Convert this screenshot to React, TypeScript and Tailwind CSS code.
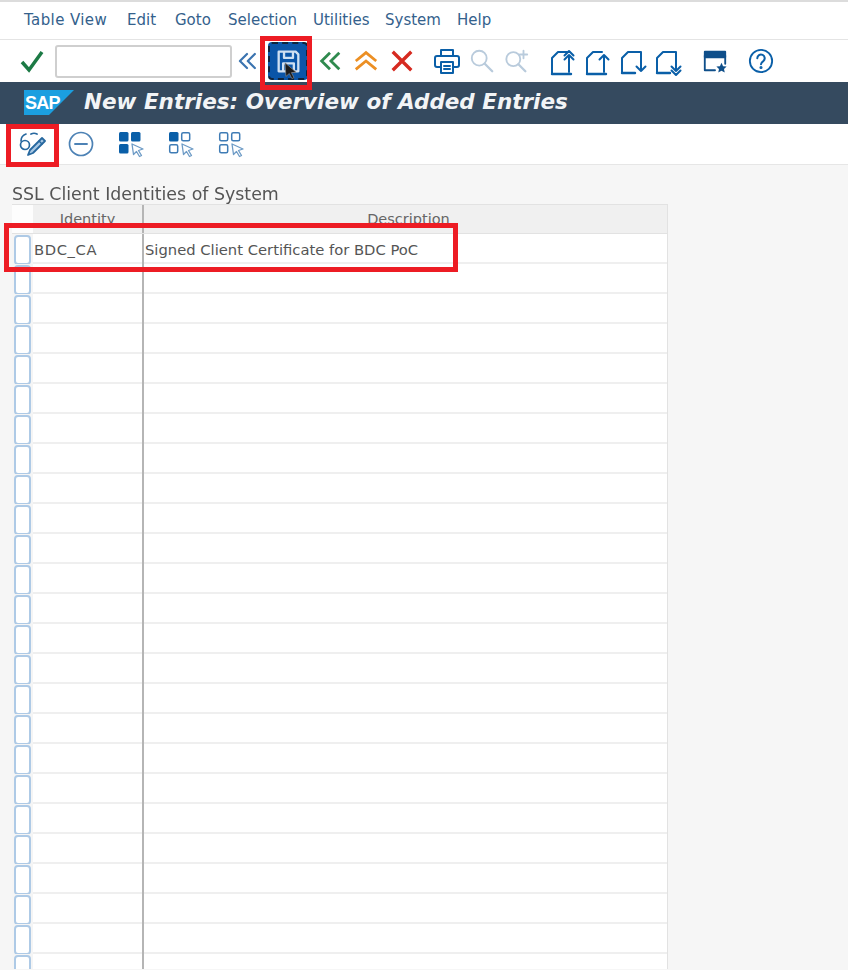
import React from 'react';

const menus = ['Table View', 'Edit', 'Goto', 'Selection', 'Utilities', 'System', 'Help'];

function Icon({ className, size = 28, children }: { className?: string; size?: number; children: React.ReactNode }) {
  return (
    <svg
      viewBox="0 0 28 28"
      width={size}
      height={size}
      fill="none"
      stroke="currentColor"
      strokeWidth={2}
      strokeLinecap="round"
      strokeLinejoin="round"
      className={`shrink-0 ${className ?? ''}`}
    >
      {children}
    </svg>
  );
}

// page with a folded corner, the arrow goes up or down at the right
function PageIcon({ arrow, double, className }: { arrow: 'up' | 'down'; double?: boolean; className?: string }) {
  return (
    <Icon className={`mt-[3px] text-[#0a5fa8] ${className ?? ''}`}>
      {arrow === 'up' ? (
        <>
          <path d="M2 25V9l6-6h9" />
          <path d="M2 25h19" strokeWidth={2.400} />
          <path d="M19 23V6M14.500 10.500 19 6l4.500 4.500" />
          {double && <path d="M14.500 6.500 19 2l4.500 4.500" />}
        </>
      ) : (
        <>
          <path d="M2 24V9l6-6h13v5" />
          <path d="M2 24h13" strokeWidth={2.400} />
          <path d="M21 8v14M16.500 17.500 21 22l4.500-4.500" />
          {double && <path d="M16.500 21.500 21 26l4.500-4.500" />}
        </>
      )}
    </Icon>
  );
}

function GridIcon({ filled, className }: { filled: number[]; className?: string }) {
  const cells = [
    [1, 2],
    [13, 2],
    [1, 14],
  ];
  return (
    <Icon className={`text-[#0a5fa8] ${className ?? ''}`}>
      {cells.map(([x, y], i) =>
        filled.includes(i) ? (
          <rect key={i} x={x} y={y} width={9.500} height={9.500} rx={1.500} fill="currentColor" stroke="none" />
        ) : (
          <rect key={i} x={x + 0.7} y={y + 0.7} width={8} height={8} rx={1.500} strokeWidth={1.500} className="text-[#3f7cb5]" />
        )
      )}
      <path d="M14 14l11 5-4.500 1.500 3 5-2 1-3-5-3 3z" strokeWidth={1.300} fill="#fff" className="text-[#6d9bc6]" />
    </Icon>
  );
}

function MainToolbar() {
  return (
    <div className="flex h-[42px] items-center bg-white">
      <Icon className="ml-[18px] text-[#1c7a45]">
        <path d="M4 15l7 8L24 5" strokeWidth={3.500} strokeLinecap="butt" strokeLinejoin="miter" />
      </Icon>
      <div className="ml-[9px] h-[33px] w-[177px] rounded-[3px] border-2 border-[#cfcfcf] bg-white" />
      <Icon size={22} className="ml-[4px] text-[#3b74b0]">
        <path d="M14 5 5 14l9 9M24 5l-9 9 9 9" strokeWidth={2.800} />
      </Icon>
      <div className="relative ml-[10px] flex h-[38px] w-[40px] shrink-0 items-center justify-center rounded-[4px] border-2 border-dashed border-[#10233a] bg-[#0a55a8]">
        <svg viewBox="0 0 28 28" width={25} height={25} fill="none" stroke="#cfe0f2" strokeWidth={2.600} strokeLinejoin="round">
          <path d="M3 3h19l3 3v19H3z" />
          <path d="M9 3v7h10V3M8 25V16h12v9" />
        </svg>
        <svg viewBox="0 0 16 20" width={14} height={17} className="absolute top-[18px] left-[14px]">
          <path d="M1 1l13 11-5.500 .5 3 6-2.500 1-3-6-4 3.500z" fill="#1a1a1a" stroke="#8a8a8a" strokeWidth={0.800} />
        </svg>
      </div>
      <Icon size={26} className="ml-[9px] text-[#2f8a4e]">
        <path d="M14 5 5 14l9 9M24 5l-9 9 9 9" strokeWidth={3} strokeLinecap="butt" strokeLinejoin="miter" />
      </Icon>
      <Icon size={26} className="ml-[10px] text-[#ec8f23]">
        <path d="M3 14l11-9 11 9M3 23l11-9 11 9" strokeWidth={3} strokeLinecap="butt" strokeLinejoin="miter" />
      </Icon>
      <Icon size={26} className="ml-[10px] text-[#d62a20]">
        <path d="M4 4l20 20M24 4 4 24" strokeWidth={3.600} strokeLinecap="butt" />
      </Icon>
      <Icon className="ml-[18px] text-[#0a5fa8]">
        <path d="M8 9V3h12v6" />
        <path d="M8 20H4a2 2 0 0 1-2-2v-7a2 2 0 0 1 2-2h20a2 2 0 0 1 2 2v7a2 2 0 0 1-2 2h-4" />
        <path d="M8 15h12v11H8zM11 19h6M11 22h6" />
      </Icon>
      <Icon size={26} className="ml-[8px] text-[#b9cbdc]">
        <circle cx="11" cy="11" r="8" />
        <path d="M17 17l8 8" strokeWidth={2.500} />
      </Icon>
      <Icon size={26} className="ml-[9px] text-[#b9cbdc]">
        <circle cx="10" cy="12" r="7.500" />
        <path d="M15.500 17.500 23 25" strokeWidth={2.500} />
        <path d="M21 3v8M17 7h8" />
      </Icon>
      <PageIcon arrow="up" double className="ml-[20px]" />
      <PageIcon arrow="up" className="ml-[7px]" />
      <PageIcon arrow="down" className="ml-[7px]" />
      <PageIcon arrow="down" double className="ml-[7px]" />
      <Icon size={26} className="ml-[19px] text-[#0f4f8a]">
        <path d="M3 4h22v6H3z" fill="currentColor" />
        <path d="M3 8v16h11M25 8v9" />
        <path d="M21 16l1.700 3.600 3.800.4-2.800 2.600.8 3.800-3.500-2-3.500 2 .8-3.800-2.800-2.600 3.800-.4z" fill="currentColor" stroke="none" />
      </Icon>
      <Icon size={26} className="ml-[20px] text-[#0a5fa8]">
        <circle cx="14" cy="14" r="12" />
        <path d="M10 11a4 4 0 1 1 6.500 3.100c-1.500 1.100-2.500 1.900-2.500 3.400" strokeWidth={2.200} />
        <circle cx="14" cy="21" r="0.700" fill="currentColor" />
      </Icon>
    </div>
  );
}

function AppToolbar() {
  return (
    <div className="flex h-[41px] items-center border-b border-[#e6e6e6] bg-white">
      <Icon className="ml-[18px] text-[#27689f]">
        <circle cx="7" cy="15" r="4.500" strokeWidth={1.700} />
        <path d="M3 11c0-4 2-6 5-7M13 4c2-1 4-1 6 0" strokeWidth={1.700} />
        <path d="M24 8l3 3-12 12-5 2 2-5z" strokeWidth={1.800} fill="#a9c8e4" />
        <path d="M21 11l3 3" strokeWidth={1.400} />
      </Icon>
      <Icon className="ml-[21px] text-[#4d82b5]">
        <circle cx="14" cy="14" r="11.500" strokeWidth={1.700} />
        <path d="M8 14h12" strokeWidth={1.900} />
      </Icon>
      <GridIcon filled={[0, 1, 2]} className="ml-[23px]" />
      <GridIcon filled={[0]} className="ml-[22px]" />
      <GridIcon filled={[]} className="ml-[22px]" />
    </div>
  );
}

function Row({ identity, description }: { identity?: string; description?: string }) {
  return (
    <div className="relative flex h-[30px] shrink-0">
      <div className="relative w-[21px] shrink-0 bg-[#f5f5f5]">
        <div className="absolute top-[1px] left-[2px] h-[30px] w-[17px] rounded-[4px] border-2 border-[#aecae6] bg-white" />
      </div>
      <div className="w-[109px] shrink-0 border-b-2 border-[#efefef] bg-white pt-[3px] pl-px text-[14.750px] leading-[26px] tracking-[0.600px] text-[#555]">{identity}</div>
      <div className="w-[2px] shrink-0 bg-[#b5b5b5]" />
      <div className="flex-1 border-b-2 border-[#efefef] bg-white pt-[3px] pl-px text-[14.750px] leading-[26px] text-[#555]">{description}</div>
    </div>
  );
}

export default function App() {
  const emptyRows = Array.from({ length: 24 });

  return (
    <div className="relative h-[970px] w-[848px] overflow-hidden bg-[#f6f6f6] font-['DejaVu_Sans',sans-serif]">
      <div className="blur-[0.4px]">
        <div className="h-[2px] bg-[#dcdcdc]" />
        <div className="grid h-[38px] grid-cols-[103px_48px_53px_85px_72px_72px_auto] items-center border-b border-[#e4e4e4] bg-white pl-[24px] text-[15px] text-[#34618c]">
          {menus.map((m) => (
            <span key={m} className="whitespace-nowrap first:tracking-[0.400px]">
              {m}
            </span>
          ))}
        </div>
        <MainToolbar />
        <div className="flex h-[42px] items-center bg-[#354a5f] pb-[1px] pl-[24px]">
          <svg viewBox="0 0 50 25" width={50} height={25} className="shrink-0">
            <path d="M0 0h50L25 25H0z" fill="#1b9fe0" />
            <text x="1" y="19" fontSize="18" fontWeight="700" letterSpacing="-0.8" fill="#fff" fontFamily="'Liberation Sans', sans-serif">
              SAP
            </text>
          </svg>
          <h1 className="ml-[10px] text-[21.500px] font-bold whitespace-nowrap text-[#f2f4f6] italic">
            New Entries: Overview of Added Entries
          </h1>
        </div>
        <AppToolbar />

        <div className="pt-[19px] pl-[12px] text-[17.400px] leading-[20px] text-[#555]">SSL Client Identities of System</div>

        <div className="ml-[12px] flex h-[765px] w-[656px] flex-col overflow-hidden border-r border-[#e2e2e2]">
          <div className="flex h-[30px] shrink-0 border-t border-b border-[#e2e2e2]">
            <div className="w-[21px] shrink-0 bg-[#fdfdfd]" />
            <div className="w-[109px] shrink-0 bg-[#f0f0f0] text-center text-[14.500px] leading-[29px] text-[#666]">Identity</div>
            <div className="w-[2px] shrink-0 bg-[#b5b5b5]" />
            <div className="flex-1 bg-[#f0f0f0] pl-[6px] text-center text-[14.500px] leading-[29px] text-[#666]">Description</div>
          </div>
          <Row identity="BDC_CA" description="Signed Client Certificate for BDC PoC" />
          {emptyRows.map((_, i) => (
            <Row key={i} />
          ))}
        </div>
      </div>

      {/* red marks laid over the screenshot */}
      <div className="absolute top-[36px] left-[260px] h-[54px] w-[52px] border-[5px] border-[#ed1c24]" />
      <div className="absolute top-[124px] left-[6px] h-[43px] w-[53px] border-[5px] border-[#ed1c24]" />
      <div className="absolute top-[223px] left-[4px] h-[49px] w-[454px] border-[5px] border-[#ed1c24]" />
    </div>
  );
}
